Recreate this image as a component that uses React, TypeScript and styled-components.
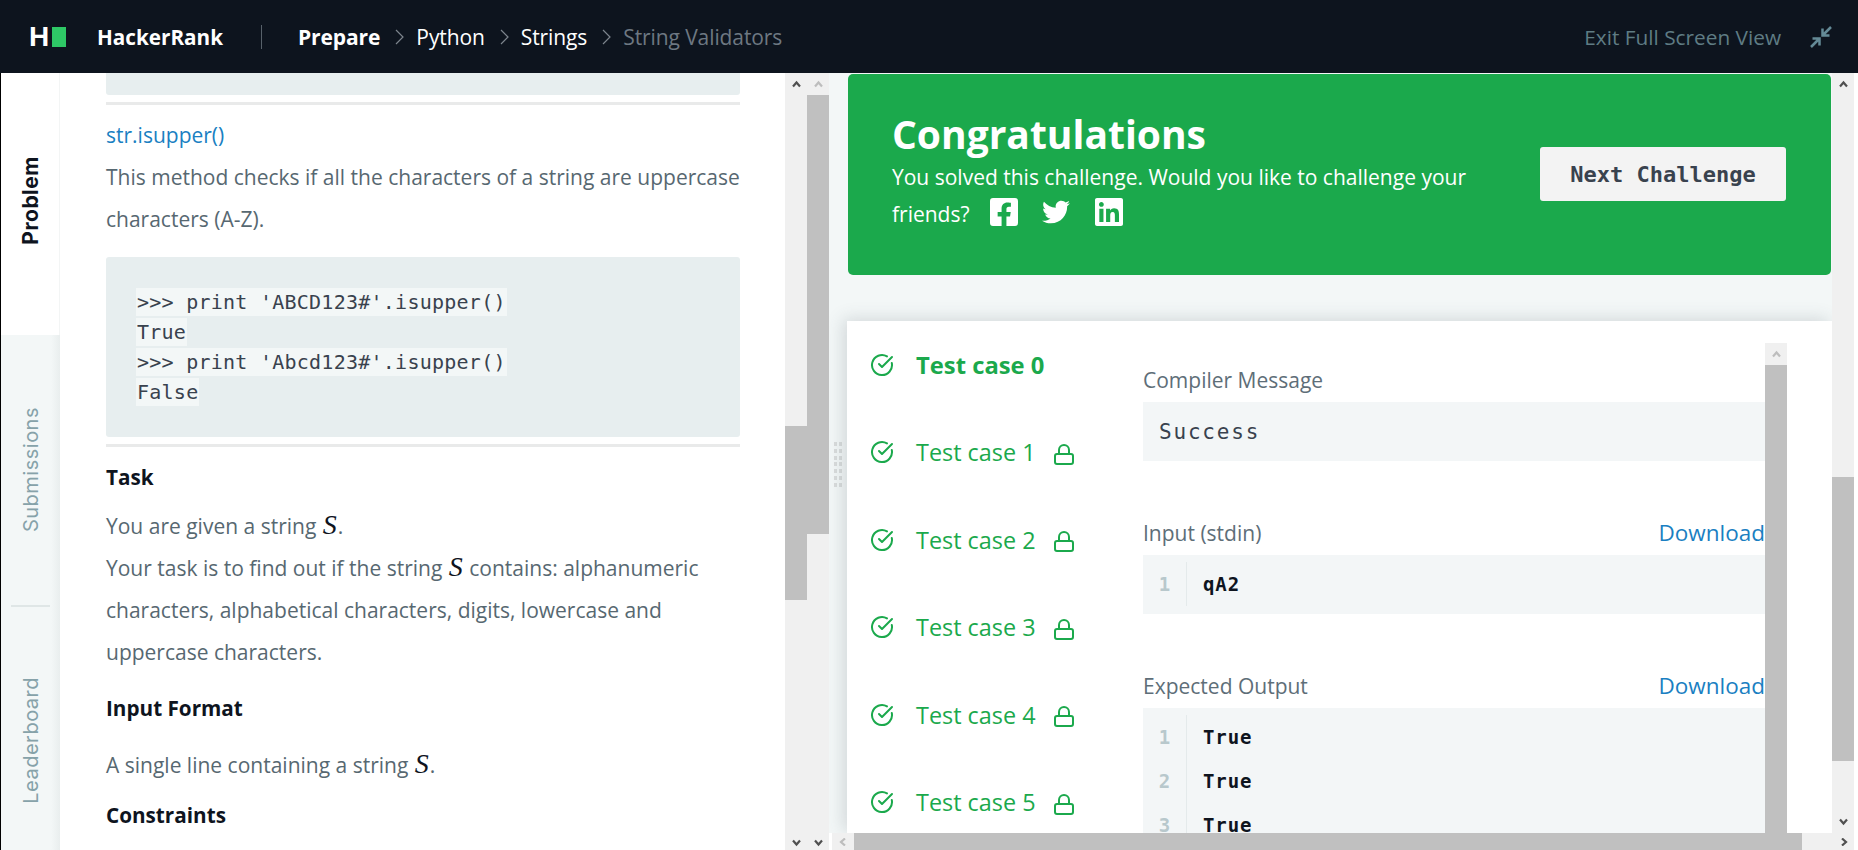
import React from 'react';
import styled, { createGlobalStyle } from 'styled-components';
import { FaFacebookSquare, FaTwitter, FaLinkedin } from 'react-icons/fa';
import { CircleCheckBig } from 'lucide-react';

const Global = createGlobalStyle`
  html, body { margin: 0; height: 100%; overflow: hidden; background: #fff; }
  #root { height: 100%; }
  * { box-sizing: border-box; }
`;

const Page = styled.div`
  height: 850px;
  display: flex;
  flex-direction: column;
  font-family: "Open Sans", "Noto Sans", sans-serif;
  overflow: hidden;
`;

const Header = styled.header`
  flex: 0 0 73px;
  background: #0d141e;
  display: flex;
  align-items: center;
  padding: 0 26px 0 29px;
  color: #fff;
`;
const Logo = styled.div`
  flex: 0 0 68px;
  display: flex;
  align-items: center;
  gap: 3px;
`;
const LogoH = styled.span`
  flex: 0 0 20px;
  font-family: "Liberation Sans", Arial, sans-serif;
  font-size: 28px;
  font-weight: 700;
  line-height: 28px;
  color: #fff;
`;
const LogoBlock = styled.span`
  width: 14px;
  height: 20px;
  background: #2ec866;
`;
const Brand = styled.span`
  flex: 0 0 164px;
  font-size: 20.7px;
  font-weight: 700;
`;
const HeadDivider = styled.span`
  width: 1px;
  height: 24px;
  background: #57616a;
  margin-right: 36px;
`;
const Crumb = styled.span<{ $strong?: boolean; $muted?: boolean }>`
  font-size: 21px;
  font-weight: ${(p) => (p.$strong ? 700 : 400)};
  color: ${(p) => (p.$muted ? '#6d7882' : '#fff')};
  letter-spacing: -0.1px;
`;
const CrumbSep = styled.svg`
  width: 9px;
  height: 16px;
  margin: 0 12px 0 15px;
  fill: none;
  stroke: #7d858d;
  stroke-width: 1.2;
`;
const ExitWrap = styled.div`
  margin-left: auto;
  display: flex;
  align-items: center;
  gap: 29px;
`;
const ExitText = styled.span`
  font-size: 20.8px;
  color: #5f7c84;
`;
const ExitIcon = styled.svg`
  width: 22px;
  height: 22px;
  fill: none;
  stroke: #648a96;
  stroke-width: 2.5;
`;

const Body = styled.div`
  flex: 1;
  min-height: 0;
  display: flex;
`;

const Sidebar = styled.nav`
  flex: 0 0 60px;
  border-left: 1px solid #000;
  display: flex;
  flex-direction: column;
  background: linear-gradient(to right, #f3f7f7 85%, #e9eeee 100%);
`;
const Tab = styled.div<{ $active?: boolean; $height: number; $pad?: string }>`
  flex: 0 0 ${(p) => p.$height}px;
  display: flex;
  align-items: center;
  justify-content: center;
  padding: ${(p) => p.$pad || '0'};
  background: ${(p) => (p.$active ? '#fff' : 'transparent')};
  border-right: ${(p) => (p.$active ? '1px solid #f3f5f5' : 'none')};
`;
const TabLabel = styled.span<{ $active?: boolean }>`
  writing-mode: vertical-rl;
  transform: rotate(180deg);
  font-family: Inter, "Open Sans", sans-serif;
  font-size: ${(p) => (p.$active ? 21 : 20)}px;
  letter-spacing: 0.5px;
  font-weight: ${(p) => (p.$active ? 700 : 400)};
  color: ${(p) => (p.$active ? '#0e141e' : '#86a2a9')};
`;
const TabDivider = styled.div`
  height: 2px;
  margin: 0 10px;
  background: #dfe6e6;
`;

const LeftPane = styled.main`
  flex: 0 0 725px;
  padding: 0 45px 0 46px;
  overflow: hidden;
  color: #576871;
  font-size: 21px;
`;
const Stub = styled.div`
  height: 22px;
  background: #e7eeef;
  border-radius: 0 0 3px 3px;
`;
const Rule = styled.hr`
  border: 0;
  height: 3px;
  margin: 7px 0 0;
  background: #e9eaea;
`;
const DocLink = styled.a`
  display: block;
  margin-top: 9px;
  line-height: 42px;
  color: #1a7fc2;
`;
const Para = styled.p<{ $top?: number }>`
  margin: ${(p) => p.$top || 0}px 0 0;
  line-height: 42px;
`;
const Code = styled.pre`
  margin: 17px 0 0;
  height: 180px;
  padding: 30px;
  background: #e7eeef;
  border-radius: 3px;
  font-family: "DejaVu Sans Mono", monospace;
  font-size: 20px;
  letter-spacing: 0.25px;
  line-height: 30px;
  color: #39424e;
`;
const CodeRun = styled.span`
  background: #f3f7f7;
  padding: 2px 1px;
`;
const Heading = styled.h3<{ $top: number }>`
  margin: ${(p) => p.$top}px 0 0;
  font-size: 20.7px;
  font-weight: 700;
  line-height: 30px;
  color: #0e141e;
`;
const Math_ = styled.i`
  font-family: "Liberation Serif", serif;
  font-size: 28px;
  line-height: 0;
  color: #0e141e;
  margin: 0 1px;
`;

const VBar = styled.div`
  flex: 0 0 22px;
  background: #f0f0f0;
  display: flex;
  flex-direction: column;
`;
const ArrowCell = styled.div<{ $end?: boolean }>`
  flex: 0 0 ${(p) => (p.$end ? 17 : 22)}px;
  display: flex;
  justify-content: center;
  align-items: ${(p) => (p.$end ? 'flex-end' : 'center')};
  padding-bottom: ${(p) => (p.$end ? 3 : 0)}px;
`;
const Chevron = styled.svg<{ $faded?: boolean }>`
  width: 9px;
  height: 8px;
  fill: none;
  stroke: ${(p) => (p.$faded ? '#bdbdbd' : '#505050')};
  stroke-width: 2.2;
`;
const Spacer = styled.div<{ $h: number }>`
  flex: 0 0 ${(p) => p.$h}px;
`;
const Grow = styled.div`
  flex: 1;
`;
const Thumb = styled.div<{ $h?: number }>`
  background: #c0c0c0;
  ${(p) => (p.$h ? `flex: 0 0 ${p.$h}px;` : 'flex: 1;')}
`;

const Up = ({ faded }: { faded?: boolean }) => (
  <Chevron viewBox="0 0 9 8" $faded={faded}><path d="M1 6.5 L4.5 2.5 L8 6.5" /></Chevron>
);
const Down = ({ faded }: { faded?: boolean }) => (
  <Chevron viewBox="0 0 9 8" $faded={faded}><path d="M1 1.5 L4.5 5.5 L8 1.5" /></Chevron>
);
const Left = ({ faded }: { faded?: boolean }) => (
  <Chevron viewBox="0 0 9 8" $faded={faded}><path d="M6 0.5 L2 4 L6 7.5" /></Chevron>
);
const Right = ({ faded }: { faded?: boolean }) => (
  <Chevron viewBox="0 0 9 8" $faded={faded}><path d="M3 0.5 L7 4 L3 7.5" /></Chevron>
);

const RightPane = styled.section`
  flex: 1;
  min-width: 0;
  display: flex;
  flex-direction: column;
`;
const RightTop = styled.div`
  flex: 0 0 760px;
  display: flex;
  overflow: hidden;
`;
const Gutter = styled.div`
  flex: 0 0 18px;
  background: #f3f7f7;
  display: flex;
  align-items: flex-start;
  padding: 369px 0 0 5px;
`;
const Handle = styled.div`
  display: grid;
  grid-template-columns: 3px 3px;
  grid-auto-rows: 4px;
  gap: 2.8px 2px;
`;
const Dot = styled.span`
  background: #d9dcdc;
`;
const RightScroll = styled.div`
  flex: 0 0 985px;
  background: #f3f7f7;
`;
const Banner = styled.div`
  margin: 1px 1px 0 1px;
  height: 201px;
  background: #1ba94c;
  border-radius: 5px;
  color: #fff;
  display: flex;
  align-items: flex-start;
  padding: 37px 45px 0 44px;
`;
const BannerText = styled.div`
  flex: 0 0 604px;
`;
const BannerTitle = styled.h2`
  margin: 0 0 1.5px;
  font-size: 39px;
  font-weight: 700;
  line-height: 46px;
`;
const BannerLine = styled.p`
  margin: 0;
  font-size: 21px;
  line-height: 37px;
`;
const Socials = styled.span`
  display: inline-flex;
  align-items: center;
  gap: 22.5px;
  margin-left: 18px;
  vertical-align: -6px;
`;
const SquareIcon = styled.span`
  display: inline-flex;
  font-size: 32px;
`;
const BirdIcon = styled.span`
  display: inline-flex;
  font-size: 28px;
`;
const NextBtn = styled.button`
  margin: 36px 0 0 0;
  flex: 0 0 246px;
  height: 54px;
  border: 0;
  border-radius: 3px;
  background: #f3f3f3;
  color: #39424e;
  font-family: "DejaVu Sans Mono", monospace;
  font-size: 22px;
  font-weight: 700;
`;
const Card = styled.div`
  margin-top: 46px;
  height: 512px;
  background: #fff;
  box-shadow: -4px -2px 16px rgba(60, 80, 90, 0.18);
  display: flex;
  padding-right: 45px;
  overflow: hidden;
`;
const CaseList = styled.div`
  flex: 0 0 296px;
  padding-left: 23px;
`;
const CaseRow = styled.div<{ $active?: boolean }>`
  height: 87.5px;
  display: flex;
  align-items: center;
  font-size: ${(p) => (p.$active ? 23.8 : 23.4)}px;
  font-weight: ${(p) => (p.$active ? 700 : 400)};
  color: #1ba94c;
`;
const CaseIcon = styled(CircleCheckBig)`
  width: 24px;
  height: 24px;
  margin-right: 22px;
  stroke-width: 2;
`;
const Lock = styled.svg`
  width: 22px;
  height: 24px;
  margin: 3px 0 0 17px;
  fill: none;
  stroke: #1ba94c;
  stroke-width: 2;
`;
const Detail = styled.div`
  flex: 1;
  min-width: 0;
  padding-top: 37px;
`;
const Section = styled.div`
  & + & { margin-top: 50px; }
`;
const SectionHead = styled.div`
  height: 44px;
  display: flex;
  align-items: center;
  justify-content: space-between;
  font-size: 21px;
  color: #5e6e78;
`;
const DownloadLink = styled.a`
  font-size: 22.5px;
  padding-bottom: 2px;
  color: #1a7fc2;
`;
const MessageBox = styled.div`
  height: 59px;
  background: #f3f6f7;
  display: flex;
  align-items: center;
  padding-left: 16px;
  font-family: "DejaVu Sans Mono", monospace;
  font-size: 21px;
  letter-spacing: 1.8px;
  color: #39424e;
`;
const CodeBox = styled.div<{ $fill?: boolean }>`
  background: #f3f6f7;
  min-height: 59px;
  ${(p) => (p.$fill ? 'height: 140px;' : '')}
  padding-top: 7px;
  display: flex;
  flex-direction: column;
`;
const CodeRow = styled.div`
  height: 44px;
  display: flex;
  align-items: center;
  font-family: "DejaVu Sans Mono", monospace;
  font-size: 19px;
  font-weight: 700;
`;
const LineNo = styled.span`
  flex: 0 0 44px;
  align-self: stretch;
  display: flex;
  align-items: center;
  justify-content: center;
  border-right: 1px solid #e4eaeb;
  color: #b8c8cc;
`;
const LineText = styled.span`
  margin-left: 16px;
  color: #0e141e;
  letter-spacing: 0.9px;
`;
const InnerBar = styled.div`
  flex: 0 0 22px;
  margin-top: 22px;
  display: flex;
  flex-direction: column;
`;
const InnerArrow = styled(ArrowCell)`
  background: #f0f0f0;
`;
const HBar = styled.div`
  flex: 0 0 17px;
  margin: 0 4px 0 3px;
  display: flex;
  background: #f0f0f0;
`;
const HArrow = styled.div`
  flex: 0 0 22px;
  display: flex;
  align-items: center;
  justify-content: center;
`;
const HThumb = styled.div`
  flex: 0 0 948px;
  background: #c0c0c0;
`;

const LockIcon = () => (
  <Lock viewBox="0 0 22 24">
    <rect x="2" y="12" width="18" height="10" rx="2" />
    <path d="M6 12 V8 a5 5 0 0 1 10 0 V12" />
  </Lock>
);

const cases = [1, 2, 3, 4, 5];

export default function App() {
  return (
    <Page>
      <Global />
      <Header>
        <Logo>
          <LogoH>H</LogoH>
          <LogoBlock />
        </Logo>
        <Brand>HackerRank</Brand>
        <HeadDivider />
        <Crumb $strong>Prepare</Crumb>
        <CrumbSep viewBox="0 0 9 16"><path d="M1 1 L8 8 L1 15" /></CrumbSep>
        <Crumb>Python</Crumb>
        <CrumbSep viewBox="0 0 9 16"><path d="M1 1 L8 8 L1 15" /></CrumbSep>
        <Crumb>Strings</Crumb>
        <CrumbSep viewBox="0 0 9 16"><path d="M1 1 L8 8 L1 15" /></CrumbSep>
        <Crumb $muted>String Validators</Crumb>
        <ExitWrap>
          <ExitText>Exit Full Screen View</ExitText>
          <ExitIcon viewBox="0 0 22 22">
            <path d="M21 1 L13 9 M12.5 2.5 V9.5 H19.5 M1 21 L9 13 M2.5 12.5 H9.5 V19.5" />
          </ExitIcon>
        </ExitWrap>
      </Header>
      <Body>
        <Sidebar>
          <Tab $active $height={262} $pad="0 0 8px 0"><TabLabel $active>Problem</TabLabel></Tab>
          <Tab $height={270}><TabLabel>Submissions</TabLabel></Tab>
          <TabDivider />
          <Tab $height={243} $pad="24px 0 0 0"><TabLabel>Leaderboard</TabLabel></Tab>
        </Sidebar>
        <LeftPane>
          <Stub />
          <Rule />
          <DocLink>str.isupper()</DocLink>
          <Para>This method checks if all the characters of a string are uppercase characters (A-Z).</Para>
          <Code>
            <CodeRun>{">>> print 'ABCD123#'.isupper()"}</CodeRun>{'\n'}
            <CodeRun>True</CodeRun>{'\n'}
            <CodeRun>{">>> print 'Abcd123#'.isupper()"}</CodeRun>{'\n'}
            <CodeRun>False</CodeRun>
          </Code>
          <Rule />
          <Heading $top={15}>Task</Heading>
          <Para $top={13}>
            You are given a string <Math_>S</Math_>.<br />
            Your task is to find out if the string <Math_>S</Math_> contains: alphanumeric characters, alphabetical characters, digits, lowercase and uppercase characters.
          </Para>
          <Heading $top={20}>Input Format</Heading>
          <Para $top={21}>A single line containing a string <Math_>S</Math_>.</Para>
          <Heading $top={14}>Constraints</Heading>
        </LeftPane>
        <VBar>
          <ArrowCell><Up /></ArrowCell>
          <Spacer $h={331} />
          <Thumb $h={174} />
          <Grow />
          <ArrowCell $end><Down /></ArrowCell>
        </VBar>
        <VBar>
          <ArrowCell><Up faded /></ArrowCell>
          <Thumb $h={439} />
          <Grow />
          <ArrowCell $end><Down /></ArrowCell>
        </VBar>
        <RightPane>
          <RightTop>
            <Gutter>
              <Handle>{Array.from({ length: 14 }, (_, i) => <Dot key={i} />)}</Handle>
            </Gutter>
            <RightScroll>
              <Banner>
                <BannerText>
                  <BannerTitle>Congratulations</BannerTitle>
                  <BannerLine>
                    You solved this challenge. Would you like to challenge your friends?
                    <Socials>
                      <SquareIcon><FaFacebookSquare /></SquareIcon>
                      <BirdIcon><FaTwitter /></BirdIcon>
                      <SquareIcon><FaLinkedin /></SquareIcon>
                    </Socials>
                  </BannerLine>
                </BannerText>
                <Grow />
                <NextBtn>Next Challenge</NextBtn>
              </Banner>
              <Card>
                <CaseList>
                  <CaseRow $active><CaseIcon />Test case 0</CaseRow>
                  {cases.map((n) => (
                    <CaseRow key={n}><CaseIcon />Test case {n}<LockIcon /></CaseRow>
                  ))}
                </CaseList>
                <Detail>
                  <Section>
                    <SectionHead>Compiler Message</SectionHead>
                    <MessageBox>Success</MessageBox>
                  </Section>
                  <Section>
                    <SectionHead>Input (stdin)<DownloadLink>Download</DownloadLink></SectionHead>
                    <CodeBox>
                      <CodeRow><LineNo>1</LineNo><LineText>qA2</LineText></CodeRow>
                    </CodeBox>
                  </Section>
                  <Section>
                    <SectionHead>Expected Output<DownloadLink>Download</DownloadLink></SectionHead>
                    <CodeBox $fill>
                      {[1, 2, 3].map((n) => (
                        <CodeRow key={n}><LineNo>{n}</LineNo><LineText>True</LineText></CodeRow>
                      ))}
                    </CodeBox>
                  </Section>
                </Detail>
                <InnerBar>
                  <InnerArrow><Up faded /></InnerArrow>
                  <Thumb />
                </InnerBar>
              </Card>
            </RightScroll>
            <VBar>
              <ArrowCell><Up /></ArrowCell>
              <Spacer $h={382} />
              <Thumb $h={284} />
              <Grow />
              <ArrowCell><Down /></ArrowCell>
            </VBar>
          </RightTop>
          <HBar>
            <HArrow><Left faded /></HArrow>
            <HThumb />
            <Grow />
            <HArrow><Right /></HArrow>
          </HBar>
        </RightPane>
      </Body>
    </Page>
  );
}
